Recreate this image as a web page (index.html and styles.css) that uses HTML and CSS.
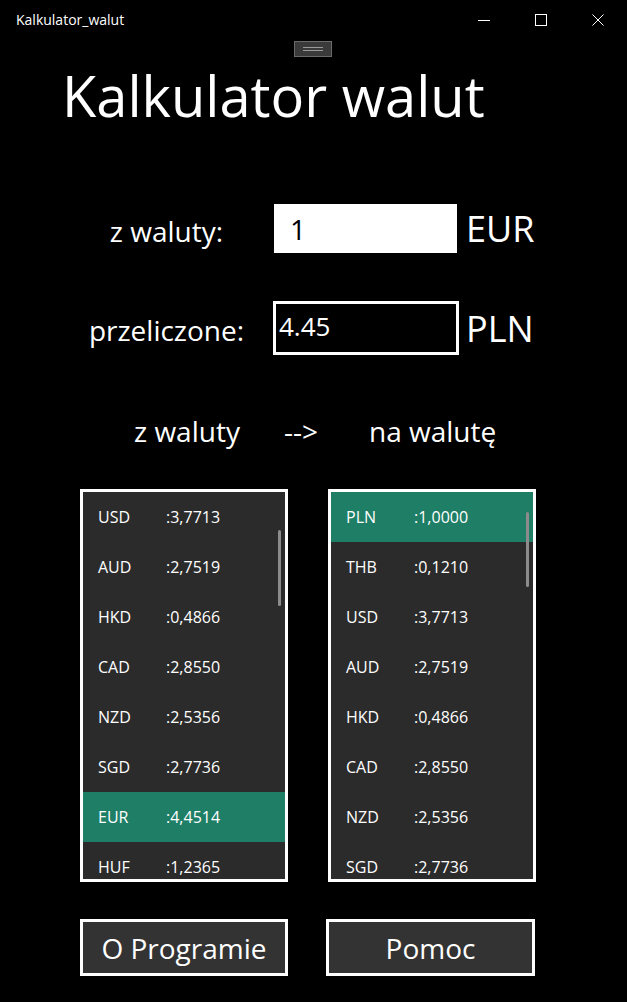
FILE: index.html
```html
<!DOCTYPE html>
<html lang="pl">
<head>
  <meta charset="UTF-8" />
  <title>Kalkulator_walut</title>
  <link rel="stylesheet" href="styles.css">
</head>
<body>
  <div class="window">

    <!-- Title bar -->
    <div class="titlebar">
      <span class="win-title">Kalkulator_walut</span>
      <div class="win-controls">
        <span class="ctl">
          <svg width="12" height="12" viewBox="0 0 12 12"><path d="M0 6.5H12" stroke="#fff" stroke-width="1"/></svg>
        </span>
        <span class="ctl">
          <svg width="12" height="12" viewBox="0 0 12 12"><rect x="0.5" y="0.5" width="11" height="11" fill="none" stroke="#fff" stroke-width="1"/></svg>
        </span>
        <span class="ctl">
          <svg width="12" height="12" viewBox="0 0 12 12"><path d="M0.5 0.5L11.5 11.5M11.5 0.5L0.5 11.5" stroke="#fff" stroke-width="1"/></svg>
        </span>
      </div>
    </div>

    <div class="grip"><span></span></div>

    <h1 class="app-title">Kalkulator walut</h1>

    <div class="form">
      <label class="form-label">z waluty:</label>
      <input class="amount" type="text" value="1">
      <span class="unit">EUR</span>

      <label class="form-label">przeliczone:</label>
      <div class="result">4.45</div>
      <span class="unit">PLN</span>
    </div>

    <div class="direction">
      <span class="dir-from">z waluty</span>
      <span class="dir-arrow">--&gt;</span>
      <span class="dir-to">na walutę</span>
    </div>

    <div class="lists">
      <div class="list">
        <div class="item"><span class="code">USD</span><span>:3,7713</span></div>
        <div class="item"><span class="code">AUD</span><span>:2,7519</span></div>
        <div class="item"><span class="code">HKD</span><span>:0,4866</span></div>
        <div class="item"><span class="code">CAD</span><span>:2,8550</span></div>
        <div class="item"><span class="code">NZD</span><span>:2,5356</span></div>
        <div class="item"><span class="code">SGD</span><span>:2,7736</span></div>
        <div class="item selected"><span class="code">EUR</span><span>:4,4514</span></div>
        <div class="item"><span class="code">HUF</span><span>:1,2365</span></div>
        <div class="scroll-thumb left-thumb"></div>
      </div>
      <div class="list">
        <div class="item selected"><span class="code">PLN</span><span>:1,0000</span></div>
        <div class="item"><span class="code">THB</span><span>:0,1210</span></div>
        <div class="item"><span class="code">USD</span><span>:3,7713</span></div>
        <div class="item"><span class="code">AUD</span><span>:2,7519</span></div>
        <div class="item"><span class="code">HKD</span><span>:0,4866</span></div>
        <div class="item"><span class="code">CAD</span><span>:2,8550</span></div>
        <div class="item"><span class="code">NZD</span><span>:2,5356</span></div>
        <div class="item"><span class="code">SGD</span><span>:2,7736</span></div>
        <div class="scroll-thumb right-thumb"></div>
      </div>
    </div>

    <div class="actions">
      <button class="action-btn">O Programie</button>
      <button class="action-btn wide">Pomoc</button>
    </div>

  </div>
</body>
</html>
```

FILE: styles.css
```css
html, body {
  margin: 0;
  background: #000;
}
body {
  font-family: 'Open Sans', 'Noto Sans', sans-serif;
  color: #fff;
}
.window {
  width: 627px;
  height: 1002px;
  box-sizing: border-box;
  background: #000;
  overflow: hidden;
}
.titlebar {
  height: 40px;
  display: flex;
  align-items: center;
  justify-content: space-between;
}
.win-title {
  margin-left: 16px;
  font-size: 14px;
  margin-top: -2px;
}
.win-controls {
  display: flex;
  margin-right: 1px;
}
.ctl {
  width: 57px;
  height: 40px;
  display: flex;
  align-items: center;
  justify-content: center;
}
.grip {
  height: 17px;
  display: flex;
  justify-content: center;
  padding-top: 1px;
  box-sizing: border-box;
}
.grip span {
  width: 38px;
  height: 16px;
  border: 1px solid #6a6a6a;
  background: #3a3a3a;
  margin-left: -2px;
  box-sizing: border-box;
  position: relative;
}
.grip span::before {
  content: '';
  position: absolute;
  left: 8px;
  right: 8px;
  top: 5px;
  height: 4px;
  border-top: 1px solid #9a9a9a;
  border-bottom: 1px solid #9a9a9a;
  box-sizing: border-box;
}
.app-title {
  margin: 2px 0 0 62px;
  font-size: 56px;
  font-weight: 400;
  line-height: 72px;
}
.form {
  margin-top: 73px;
  padding-left: 60px;
  display: grid;
  grid-template-columns: 213px 193px auto;
  grid-template-rows: 49px 54px;
  row-gap: 48px;
  align-items: center;
}
.form-label {
  font-size: 28px;
  text-align: center;
  margin-top: 4px;
}
.amount {
  width: 183px;
  height: 49px;
  box-sizing: border-box;
  border: none;
  outline: none;
  margin-left: 1px;
  padding: 0 0 0 16px;
  font-family: inherit;
  font-size: 28px;
  color: #000;
  background: #fff;
}
.result {
  width: 186px;
  height: 54px;
  box-sizing: border-box;
  border: 3px solid #fff;
  padding: 5px 0 0 3px;
  font-size: 26px;
  line-height: 1.35;
}
.unit {
  font-size: 36px;
}
.direction {
  margin-top: 56px;
  display: flex;
  padding-left: 134px;
  font-size: 28px;
  line-height: 40px;
}
.dir-from { width: 150px; }
.dir-arrow { width: 85px; }
.lists {
  margin-top: 38px;
  padding-left: 80px;
  display: flex;
  gap: 40px;
}
.list {
  position: relative;
  width: 208px;
  height: 393px;
  box-sizing: border-box;
  border: 3px solid #fff;
  background: #2b2b2b;
  overflow: hidden;
}
.item {
  height: 50px;
  display: flex;
  align-items: center;
  padding-left: 15px;
  font-size: 16px;
  flex-shrink: 0;
}
.item.selected {
  background: #1e7e66;
}
.code {
  width: 68px;
}
.scroll-thumb {
  position: absolute;
  width: 3px;
  background: #8c8c8c;
  border-radius: 2px;
}
.left-thumb {
  right: 4px;
  top: 38px;
  height: 76px;
}
.right-thumb {
  right: 4px;
  top: 20px;
  height: 75px;
}
.actions {
  margin-top: 37px;
  padding-left: 80px;
  display: flex;
  gap: 38px;
}
.action-btn {
  width: 208px;
  height: 57px;
  box-sizing: border-box;
  border: 3px solid #fff;
  background: #333;
  color: #fff;
  font-family: inherit;
  font-size: 28px;
  padding: 0;
}
.action-btn.wide {
  width: 209px;
}
```
